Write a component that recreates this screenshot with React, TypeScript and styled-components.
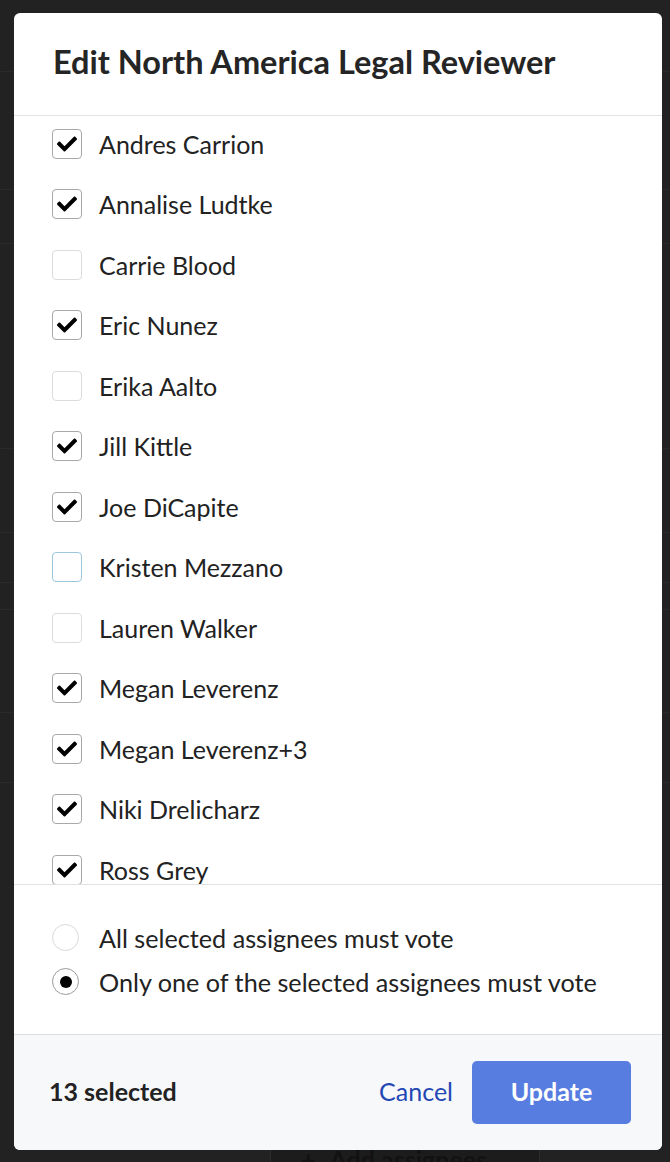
import React from "react";
import styled, { createGlobalStyle } from "styled-components";
import { FaCheck } from "react-icons/fa";

const GlobalStyle = createGlobalStyle`
  html, body {
    margin: 0;
    padding: 0;
    background: #222222;
    font-family: Lato, "Noto Sans", "Liberation Sans", sans-serif;
    -webkit-font-smoothing: antialiased;
  }
  * { box-sizing: border-box; }
`;

const Page = styled.div`
  position: relative;
  width: 670px;
  height: 1162px;
  overflow: hidden;
  background: #222222;
  display: flex;
  flex-direction: column;
`;

const BgRow = styled.div<{ $h: number }>`
  height: ${(p) => p.$h}px;
  border-bottom: 1px solid #2a2a2a;
  flex-shrink: 0;
`;

const BgFill = styled.div`
  flex: 1;
  display: flex;
  align-items: flex-end;
`;

const AddButton = styled.div`
  margin-left: 270px;
  width: 270px;
  height: 34px;
  margin-bottom: -12px;
  border: 1px solid #2c2c2c;
  background: #1c1c1c;
  display: flex;
  align-items: flex-start;
  gap: 14px;
  padding: 6px 0 0 30px;
  color: #121212;
  font-size: 25px;
  font-weight: 700;
  line-height: 1;
`;

const Modal = styled.div`
  position: absolute;
  top: 13px;
  left: 14px;
  width: 648px;
  height: 1137px;
  background: #ffffff;
  border-radius: 6px;
  overflow: hidden;
  display: flex;
  flex-direction: column;
`;

const Header = styled.div`
  height: 103px;
  flex-shrink: 0;
  border-bottom: 1px solid #e2e2e2;
  display: flex;
  align-items: center;
  padding: 0 0 5px 39px;
`;

const Title = styled.h2`
  margin: 0;
  font-size: 32.5px;
  font-weight: 700;
  color: #252525;
`;

const List = styled.div`
  height: 769px;
  flex-shrink: 0;
  overflow: hidden;
  border-bottom: 1px solid #e2e2e2;
  padding: 12.5px 0 0 38px;
  display: flex;
  flex-direction: column;
  gap: 30.5px;
`;

const Row = styled.label`
  display: flex;
  align-items: center;
  gap: 17px;
  height: 30px;
  flex-shrink: 0;
  font-size: 25px;
  color: #222222;
  cursor: pointer;
`;

const Box = styled.span<{ $checked: boolean; $focus?: boolean }>`
  width: 30px;
  height: 30px;
  flex-shrink: 0;
  border-radius: 4px;
  border: 1px solid
    ${(p) => (p.$focus ? "#9cc8de" : p.$checked ? "#a8a8a8" : "#dcdcdc")};
  display: flex;
  align-items: center;
  justify-content: center;
  color: #000;
`;

const RadioSection = styled.div`
  height: 150px;
  flex-shrink: 0;
  border-bottom: 1px solid #dedede;
  padding: 39px 0 0 38px;
  display: flex;
  flex-direction: column;
  gap: 17px;
`;

const RadioRow = styled.label`
  display: flex;
  align-items: center;
  gap: 20px;
  height: 27px;
  font-size: 25.2px;
  color: #222222;
`;

const RadioCircle = styled.span<{ $checked: boolean }>`
  width: 27px;
  height: 27px;
  border-radius: 50%;
  border: 1px solid ${(p) => (p.$checked ? "#9a9a9a" : "#d8d8d8")};
  display: flex;
  align-items: center;
  justify-content: center;
  flex-shrink: 0;
  &::after {
    content: "";
    display: ${(p) => (p.$checked ? "block" : "none")};
    width: 12px;
    height: 12px;
    border-radius: 50%;
    background: #000;
  }
`;

const Footer = styled.div`
  flex: 1;
  background: #f7f8fa;
  display: flex;
  align-items: center;
  padding: 0 31px 0 35px;
`;

const Count = styled.div`
  font-size: 25px;
  font-weight: 700;
  color: #222222;
  flex: 1;
  padding-bottom: 3px;
`;

const CancelLink = styled.button`
  background: none;
  border: none;
  padding: 0 0 3px;
  margin-right: 19px;
  font-family: inherit;
  font-size: 25px;
  color: #2347b4;
  cursor: pointer;
`;

const UpdateButton = styled.button`
  width: 159px;
  height: 63px;
  border: none;
  border-radius: 5px;
  background: #587de0;
  color: #ffffff;
  font-family: inherit;
  font-size: 25px;
  font-weight: 700;
  padding: 0 0 3px;
  cursor: pointer;
`;

const people: { name: string; checked: boolean; focus?: boolean }[] = [
  { name: "Andres Carrion", checked: true },
  { name: "Annalise Ludtke", checked: true },
  { name: "Carrie Blood", checked: false },
  { name: "Eric Nunez", checked: true },
  { name: "Erika Aalto", checked: false },
  { name: "Jill Kittle", checked: true },
  { name: "Joe DiCapite", checked: true },
  { name: "Kristen Mezzano", checked: false, focus: true },
  { name: "Lauren Walker", checked: false },
  { name: "Megan Leverenz", checked: true },
  { name: "Megan Leverenz+3", checked: true },
  { name: "Niki Drelicharz", checked: true },
  { name: "Ross Grey", checked: true },
];

export default function App() {
  return (
    <>
      <GlobalStyle />
      <Page>
        <BgRow $h={72} />
        <BgRow $h={118} />
        <BgRow $h={54} />
        <BgRow $h={205} />
        <BgRow $h={84} />
        <BgRow $h={50} />
        <BgRow $h={27} />
        <BgRow $h={103} />
        <BgRow $h={70} />
        <BgFill>
          <AddButton>
            <span>+</span>
            <span>Add assignees</span>
          </AddButton>
        </BgFill>
        <Modal>
          <Header>
            <Title>Edit North America Legal Reviewer</Title>
          </Header>
          <List>
            {people.map((p) => (
              <Row key={p.name}>
                <Box $checked={p.checked} $focus={p.focus}>
                  {p.checked && <FaCheck size={20} />}
                </Box>
                {p.name}
              </Row>
            ))}
          </List>
          <RadioSection>
            <RadioRow>
              <RadioCircle $checked={false} />
              All selected assignees must vote
            </RadioRow>
            <RadioRow>
              <RadioCircle $checked={true} />
              Only one of the selected assignees must vote
            </RadioRow>
          </RadioSection>
          <Footer>
            <Count>13 selected</Count>
            <CancelLink>Cancel</CancelLink>
            <UpdateButton>Update</UpdateButton>
          </Footer>
        </Modal>
      </Page>
    </>
  );
}
